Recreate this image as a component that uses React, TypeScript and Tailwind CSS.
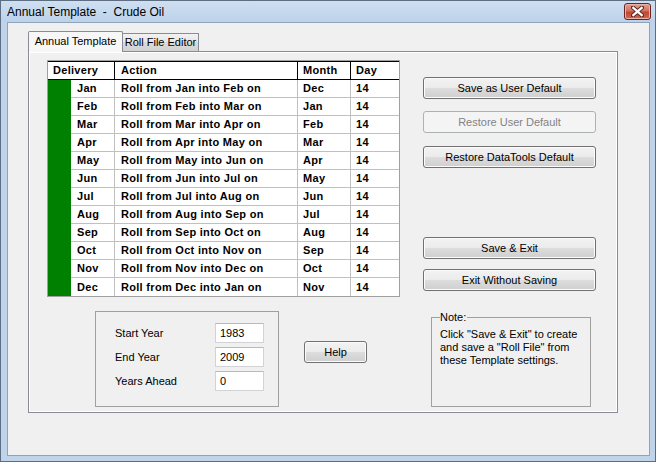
import React from 'react'

const months = ['Jan', 'Feb', 'Mar', 'Apr', 'May', 'Jun', 'Jul', 'Aug', 'Sep', 'Oct', 'Nov', 'Dec']

const rows = months.map((m, i) => ({
  delivery: m,
  action: `Roll from ${m} into ${months[(i + 1) % 12]} on`,
  month: months[(i + 11) % 12],
  day: 14,
}))

function WinButton({ label, disabled, className = '' }: { label: string; disabled?: boolean; className?: string }) {
  return (
    <div
      className={`h-[22px] flex items-center justify-center rounded-[3px] border text-[11px] ${
        disabled
          ? 'border-[#adb2b5] bg-[#f4f4f4] text-[#838383]'
          : 'border-[#707070] bg-[linear-gradient(#f2f2f2,#ebebeb_50%,#dddddd_50%,#cfcfcf)] shadow-[inset_0_0_0_1px_#fcfcfc] text-black'
      } ${className}`}
    >
      {label}
    </div>
  )
}

function CloseButton() {
  return (
    <div className="w-[27px] h-[17px] rounded-[3px] border border-[#6b2424] bg-[linear-gradient(#e0a195,#d0735f_45%,#c24631_55%,#cf6a52)] flex items-center justify-center shadow-[inset_0_0_0_1px_#eab3a6]">
      <svg width="13" height="11" viewBox="0 0 13 11">
        <path d="M2 1.5 L11 9.5 M11 1.5 L2 9.5" stroke="#5a2020" strokeWidth="4" strokeLinecap="square" />
        <path d="M2.3 1.8 L10.7 9.2 M10.7 1.8 L2.3 9.2" stroke="#ffffff" strokeWidth="2.2" strokeLinecap="square" />
      </svg>
    </div>
  )
}

function YearField({ label, value }: { label: string; value: string }) {
  return (
    <div className="flex items-center h-[20px]">
      <div className="w-[119px] pl-[19px] text-[11px]">{label}</div>
      <div className="w-[49px] h-[20px] bg-white border border-[#d2d3d7] border-t-[#b8bac0] flex items-center pl-[4px] text-[11px]">
        {value}
      </div>
    </div>
  )
}

export default function App() {
  return (
    <div className="w-[656px] h-[462px] flex flex-col bg-[#bfd4ea] border border-[#5e6e82] font-['Liberation_Sans',Arial,sans-serif] text-black">
      {/* Title bar */}
      <div className="h-[21px] flex items-center justify-between pl-[6px] pr-[4px] bg-[linear-gradient(#cfdff1,#bcd2ea)]">
        <span className="text-[12px] whitespace-pre">Annual Template  -  Crude Oil</span>
        <CloseButton />
      </div>

      {/* Client area */}
      <div className="flex-1 ml-[6px] mr-[5px] mb-[5px] bg-[#f0f0f0] border border-[#8fa3b9]">
        {/* Tabs */}
        <div className="relative z-10 flex items-end h-[20px] ml-[20px] mt-[8px]">
          <div className="h-[21px] -mb-px w-[95px] bg-[#f7f7f7] border border-b-0 border-[#898c95] rounded-t-[2px] flex items-center justify-center text-[11px] pb-[2px]">
            Annual Template
          </div>
          <div className="h-[18px] w-[77px] -ml-px bg-[linear-gradient(#f2f2f2,#e6e6e6_50%,#dadada_50%,#d2d2d2)] border border-b-0 border-[#898c95] flex items-center justify-center text-[11px] -z-10">
            Roll File Editor
          </div>
        </div>

        {/* Tab page */}
        <div className="ml-[20px] w-[590px] h-[362px] border border-[#898c95] bg-[#f0f0f0] shadow-[inset_0_0_0_1px_#ffffff]">
          <div className="flex pl-[18px] pt-[8px]">
            {/* Table */}
            <div className="w-[353px] border border-[#a0a0a0] bg-white font-bold text-[11px] tracking-[0.3px]">
              <div className="flex h-[19px] border-t border-b border-black">
                <div className="w-[67px] border-r border-black pl-[5px] flex items-center">Delivery</div>
                <div className="w-[183px] border-r border-black pl-[6px] flex items-center">Action</div>
                <div className="w-[53px] border-r border-black pl-[5px] flex items-center">Month</div>
                <div className="w-[48px] pl-[5px] flex items-center">Day</div>
              </div>
              {rows.map((r, i) => (
                <div key={r.delivery} className="flex h-[18px]">
                  <div className="w-[23px] h-full bg-[#008000]" />
                  <div
                    className={`flex flex-1 ${i < rows.length - 1 ? 'border-b' : ''} border-[#c0c0c0]`}
                  >
                    <div className="w-[44px] border-r border-[#c0c0c0] pl-[6px] flex items-center">{r.delivery}</div>
                    <div className="w-[183px] border-r border-[#c0c0c0] pl-[6px] flex items-center">{r.action}</div>
                    <div className="w-[53px] border-r border-[#c0c0c0] pl-[5px] flex items-center">{r.month}</div>
                    <div className="w-[47px] pl-[5px] flex items-center">{r.day}</div>
                  </div>
                </div>
              ))}
            </div>

            {/* Buttons */}
            <div className="ml-[23px] w-[173px] pt-[17px] flex flex-col">
              <WinButton label="Save as User Default" />
              <WinButton label="Restore User Default" disabled className="mt-[12px]" />
              <WinButton label="Restore DataTools Default" className="mt-[13px]" />
              <WinButton label="Save & Exit" className="mt-[69px]" />
              <WinButton label="Exit Without Saving" className="mt-[10px]" />
            </div>
          </div>

          {/* Bottom area */}
          <div className="flex items-start pl-[66px] mt-[14px]">
            <div className="w-[184px] h-[96px] border border-[#a0a0a0] pt-[11px] flex flex-col gap-[4px]">
              <YearField label="Start Year" value="1983" />
              <YearField label="End Year" value="2009" />
              <YearField label="Years Ahead" value="0" />
            </div>

            <WinButton label="Help" className="ml-[25px] mt-[30px] w-[63px]" />

            <fieldset className="ml-[64px] w-[160px] h-[96px] border border-[#a0a0a0] pl-[8px] pr-[4px] text-[11px] leading-[13px]">
              <legend className="pr-[1px]">Note:</legend>
              <p className="mt-[4px]">
                Click "Save &amp; Exit" to create and save a "Roll File" from these Template settings.
              </p>
            </fieldset>
          </div>
        </div>
      </div>
    </div>
  )
}
